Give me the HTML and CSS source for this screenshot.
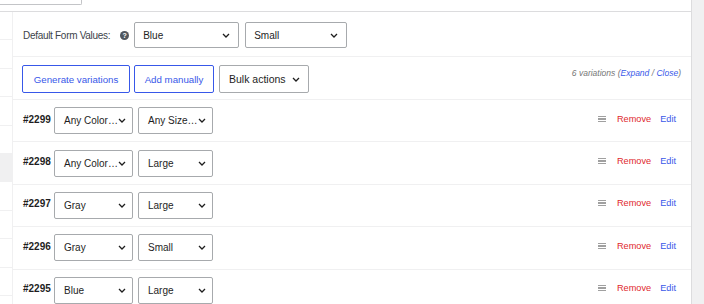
FILE: index.html
```html
<!DOCTYPE html>
<html lang="en">
<head>
    <meta charset="UTF-8">
    <meta name="viewport" content="width=device-width, initial-scale=1.0">
    <title>Variations</title>
    <link rel="stylesheet" href="styles.css">
</head>
<body>

    <div class="screen">
        <div class="content">
            <!-- Tab strip above the panel -->
            <div class="top"><div class="tab"></div></div>

            <div class="panel">
                <ul class="side">
                    <li></li><li></li><li></li><li></li><li></li>
                    <li class="active"></li><li></li><li></li><li></li><li></li>
                </ul>

                <div class="main">
                    <!-- Default values -->
                    <div class="defaults">
                        <span class="label">Default Form Values:</span>
                        <span class="help">?</span>
                        <div class="select wide"><span>Blue</span><svg class="chev" viewBox="0 0 8 5"><path d="M1 1l3 3 3-3"/></svg></div>
                        <div class="select wide"><span>Small</span><svg class="chev" viewBox="0 0 8 5"><path d="M1 1l3 3 3-3"/></svg></div>
                    </div>

                    <!-- Toolbar -->
                    <div class="toolbar">
                        <button class="btn gen">Generate variations</button>
                        <button class="btn add">Add manually</button>
                        <div class="select bulk"><span>Bulk actions</span><svg class="chev" viewBox="0 0 8 5"><path d="M1 1l3 3 3-3"/></svg></div>
                        <span class="count">6 variations (<a>Expand</a> / <a>Close</a>)</span>
                    </div>

                    <!-- Variation rows -->
                    <div class="row">
                        <span class="vid">#2299</span>
                        <div class="select color"><span>Any Color…</span><svg class="chev" viewBox="0 0 8 5"><path d="M1 1l3 3 3-3"/></svg></div>
                        <div class="select size"><span>Any Size…</span><svg class="chev" viewBox="0 0 8 5"><path d="M1 1l3 3 3-3"/></svg></div>
                        <div class="actions"><span class="handle"></span><a class="remove">Remove</a><a class="edit">Edit</a></div>
                    </div>
                    <div class="row">
                        <span class="vid">#2298</span>
                        <div class="select color"><span>Any Color…</span><svg class="chev" viewBox="0 0 8 5"><path d="M1 1l3 3 3-3"/></svg></div>
                        <div class="select size"><span>Large</span><svg class="chev" viewBox="0 0 8 5"><path d="M1 1l3 3 3-3"/></svg></div>
                        <div class="actions"><span class="handle"></span><a class="remove">Remove</a><a class="edit">Edit</a></div>
                    </div>
                    <div class="row">
                        <span class="vid">#2297</span>
                        <div class="select color"><span>Gray</span><svg class="chev" viewBox="0 0 8 5"><path d="M1 1l3 3 3-3"/></svg></div>
                        <div class="select size"><span>Large</span><svg class="chev" viewBox="0 0 8 5"><path d="M1 1l3 3 3-3"/></svg></div>
                        <div class="actions"><span class="handle"></span><a class="remove">Remove</a><a class="edit">Edit</a></div>
                    </div>
                    <div class="row">
                        <span class="vid">#2296</span>
                        <div class="select color"><span>Gray</span><svg class="chev" viewBox="0 0 8 5"><path d="M1 1l3 3 3-3"/></svg></div>
                        <div class="select size"><span>Small</span><svg class="chev" viewBox="0 0 8 5"><path d="M1 1l3 3 3-3"/></svg></div>
                        <div class="actions"><span class="handle"></span><a class="remove">Remove</a><a class="edit">Edit</a></div>
                    </div>
                    <div class="row">
                        <span class="vid">#2295</span>
                        <div class="select color"><span>Blue</span><svg class="chev" viewBox="0 0 8 5"><path d="M1 1l3 3 3-3"/></svg></div>
                        <div class="select size"><span>Large</span><svg class="chev" viewBox="0 0 8 5"><path d="M1 1l3 3 3-3"/></svg></div>
                        <div class="actions"><span class="handle"></span><a class="remove">Remove</a><a class="edit">Edit</a></div>
                    </div>
                </div>
            </div>
        </div>
        <div class="gutter"></div>
    </div>

</body>
</html>
```

FILE: styles.css
```css
body {
    margin: 0;
    font-family: "Liberation Sans", Arial, sans-serif;
    background-color: #f0f0f1;
    color: #1e1e1e;
    overflow: hidden;
}
.screen {
    display: flex;
    height: 304px;
    overflow: hidden;
}
.content {
    width: 691px;
    background-color: #fff;
    border-right: 1px solid #dcdcde;
}
.gutter {
    flex: 1;
}
.top {
    height: 11px;
    border-bottom: 1px solid #dcdcde;
}
.tab {
    width: 81px;
    height: 4px;
    border-right: 1px solid #c3c4c7;
    border-bottom: 1px solid #c3c4c7;
    border-radius: 0 0 2px 0;
}
.panel {
    display: flex;
}
.side {
    width: 12px;
    list-style-type: none;
    margin: 0;
    padding: 0;
    border-right: 1px solid #f0f0f1;
}
.side li {
    height: 27.4px;
    border-bottom: 1px solid #f0f0f1;
}
.side li.active {
    background-color: #f0f0f1;
}
.main {
    flex: 1;
}

/* selects */
.select {
    box-sizing: border-box;
    display: flex;
    align-items: center;
    justify-content: space-between;
    height: 27px;
    padding: 0 8px 0 9px;
    border: 1px solid #a7aaad;
    border-radius: 2px;
    font-size: 10px;
    background-color: #fff;
}
.chev {
    width: 8px;
    height: 5px;
    fill: none;
    stroke: #1e1e1e;
    stroke-width: 1.3;
}
.select.wide {
    width: 105px;
    height: 26px;
    padding-left: 8px;
}
.select.wide + .select.wide {
    width: 102px;
    margin-left: 2px;
}
.select.bulk {
    width: 90px;
    height: 28px;
    margin-left: 1px;
    font-size: 10.5px;
}
.select.color {
    width: 79px;
    padding-right: 6px;
}
.select.size {
    width: 75px;
    margin-left: 5px;
    padding-right: 6px;
}

/* default values */
.defaults {
    display: flex;
    align-items: center;
    gap: 4px;
    padding: 10px 10px 8px;
    border-bottom: 1px solid #f0f0f1;
}
.label {
    font-size: 10px;
    letter-spacing: -0.3px;
    color: #3c434a;
    margin-right: 6px;
}
.help {
    width: 9px;
    height: 9px;
    margin-right: 1px;
    border-radius: 50%;
    background-color: #50575e;
    color: #fff;
    font-size: 7px;
    font-weight: bold;
    line-height: 9px;
    text-align: center;
}

/* toolbar */
.toolbar {
    display: flex;
    align-items: center;
    gap: 4px;
    padding: 8px 10px 6px 9px;
    border-bottom: 1px solid #f0f0f1;
}
.btn {
    height: 28px;
    padding: 0;
    border: 1px solid #3858e9;
    border-radius: 2px;
    background-color: #fff;
    color: #3858e9;
    font-family: inherit;
    font-size: 9.7px;
}
.btn.gen {
    width: 108px;
}
.btn.add {
    width: 80px;
}
.count {
    margin-left: auto;
    margin-top: -12px;
    font-size: 8.5px;
    font-style: italic;
    color: #757575;
}
.count a {
    color: #3858e9;
}

/* variation rows */
.row {
    box-sizing: border-box;
    display: flex;
    align-items: center;
    height: 42.4px;
    padding: 0 15px 0 10px;
    border-bottom: 1px solid #f0f0f1;
}
.vid {
    width: 31px;
    font-size: 10px;
    font-weight: bold;
    margin-top: -3px;
}
.actions {
    display: flex;
    align-items: center;
    margin-left: auto;
    margin-top: -4px;
    font-size: 9.2px;
}
.handle {
    width: 8px;
    height: 6px;
    margin-right: 11px;
    background: repeating-linear-gradient(#a0a0a0 0 1.3px, transparent 1.3px 2.35px);
}
.remove {
    color: #e0282e;
    margin-right: 9px;
}
.edit {
    color: #3858e9;
}
```
